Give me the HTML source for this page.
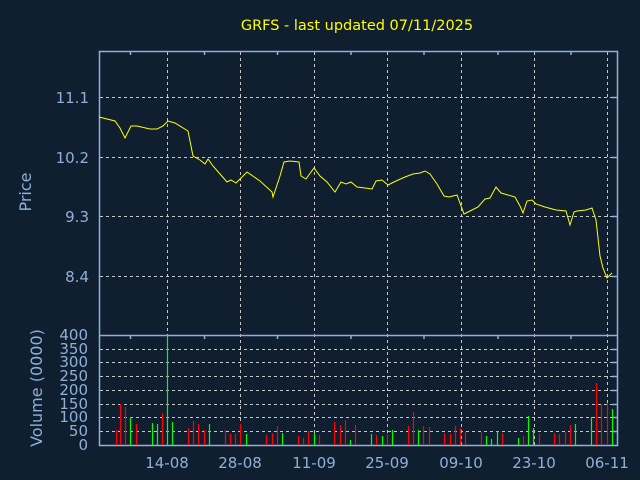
<!DOCTYPE html>
<html><head><meta charset="utf-8"><style>
html,body{margin:0;padding:0;background:#0f1f30;}
svg{display:block;}
text{font-family:"DejaVu Sans","Liberation Sans",sans-serif;fill:#8fb0d8;}
</style></head><body>
<svg width="640" height="480" viewBox="0 0 640 480" xmlns="http://www.w3.org/2000/svg">
<rect width="640" height="480" fill="#0f1f30"/>
<text x="357" y="30" text-anchor="middle" font-size="14.5" style="fill:#ffff00">GRFS - last updated 07/11/2025</text>
<g stroke="#c8c8c8" stroke-width="1" stroke-dasharray="3,3" fill="none">
<path d="M100 97.5H617M100 157.5H617M100 216.5H617M100 276.5H617"/>
<path d="M100 349.5H617M100 362.5H617M100 376.5H617M100 390.5H617M100 404.5H617M100 417.5H617M100 431.5H617"/>
<path d="M167.5 52V445M240.5 52V445M314.5 52V445M387.5 52V445M461.5 52V445M534.5 52V445M607.5 52V445"/>
</g>
<g stroke="#8fb0d8" stroke-width="1.5" fill="none">
<path d="M99.5 51.5H617.5V445.5H99.5Z"/>
<path d="M99.5 335.5H617.5"/>
<path d="M130.5 51V55M204.5 51V55M277.5 51V55M351 51V55M424 51V55M498 51V55M571 51V55"/>
<path d="M130.5 335V339M204.5 335V339M277.5 335V339M351 335V339M424 335V339M498 335V339M571 335V339"/>
<path d="M612 97.5H617M612 157.5H617M612 216.5H617M612 276.5H617"/>
<path d="M612 349.5H617M612 362.5H617M612 376.5H617M612 390.5H617M612 404.5H617M612 417.5H617M612 431.5H617"/>
</g>
<polyline fill="none" stroke="#ffff00" stroke-width="1" points="99,117 115,121 120,128 125,138 131,126 137,126 150,129 157,129 163,126 168,121 175,123 188,131 193,156 200,160 205,164 208,159 213,166 220,174 227,182 231,180 236,183 247,172 260,181 272,192 273,197 280,176 284,162 290,161 299,162 301,176 306,179 314,168 320,176 327,182 335,192 341,182 346,184 351,182 357,187 365,188 372,189 376,181 382,180 388,185 396,181 405,177 413,174 420,173 425,171 430,174 437,184 444,196 449,197 457,195 464,214 470,211 478,207 485,199 490,198 496,187 501,193 515,197 520,206 523,213 527,201 532,200 536,204 545,207 556,210 566,211 570,225 574,212 577,211 586,210 592,208 596,220 600,256 603,268 607,278 612,273"/>
<g stroke="#ff0000" stroke-width="1.2">
<path d="M116.5 430V445M120.5 404V445M125.5 407V445M136.5 424V445M162.5 413V445M188.5 428V445M193.5 421V445M198.5 424V445M204.5 430V445M225.5 430V445M230.5 434V445M235.5 434V445M240.5 424V445M266.5 435V445M272.5 433V445M277.5 426V445M298.5 436V445M303.5 438V445M308.5 431V445M319.5 435V445M334.5 422V445M340.5 425V445M345.5 420V445M355.5 425V445M376.5 435V445M387.5 434V445M408.5 426V445M413.5 412V445M423.5 426V445M429.5 427V445M444.5 433V445M450.5 434V445M455.5 426V445M460.5 428V445M465.5 432V445M481.5 432V445M502.5 433V445M523.5 436V445M539.5 434V445M554.5 433V445M559.5 434V445M565.5 432V445M570.5 425V445M596.5 383V445M601.5 404V445M607.5 403V445"/>
</g>
<g stroke="#00ff00" stroke-width="1.2">
<path d="M130.5 417V445M152.5 423V445M157.5 424V445M167.5 335V445M172.5 422V445M209.5 424V445M246.5 434V445M282.5 433V445M314.5 433V445M350.5 440V445M371.5 434V445M382.5 436V445M392.5 430V445M418.5 430V445M486.5 436V445M491.5 439V445M497.5 431V445M518.5 438V445M528.5 416V445M533.5 428V445M575.5 424V445M591.5 417V445M612.5 409V445"/>
</g>
<g font-size="15" text-anchor="end">
<text x="89" y="103">11.1</text>
<text x="89" y="163">10.2</text>
<text x="89" y="222">9.3</text>
<text x="89" y="282">8.4</text>
<text x="88" y="340">400</text>
<text x="88" y="354">350</text>
<text x="88" y="367">300</text>
<text x="88" y="381">250</text>
<text x="88" y="395">200</text>
<text x="88" y="409">150</text>
<text x="88" y="422">100</text>
<text x="88" y="436">50</text>
<text x="88" y="450">0</text>
</g>
<g font-size="15" text-anchor="middle">
<text x="167" y="468">14-08</text>
<text x="240" y="468">28-08</text>
<text x="314" y="468">11-09</text>
<text x="387" y="468">25-09</text>
<text x="461" y="468">09-10</text>
<text x="534" y="468">23-10</text>
<text x="607" y="468">06-11</text>
</g>
<text transform="translate(31,192) rotate(-90)" font-size="16" text-anchor="middle">Price</text>
<text transform="translate(42,388) rotate(-90)" font-size="16" text-anchor="middle">Volume (0000)</text>
</svg>
</body></html>
